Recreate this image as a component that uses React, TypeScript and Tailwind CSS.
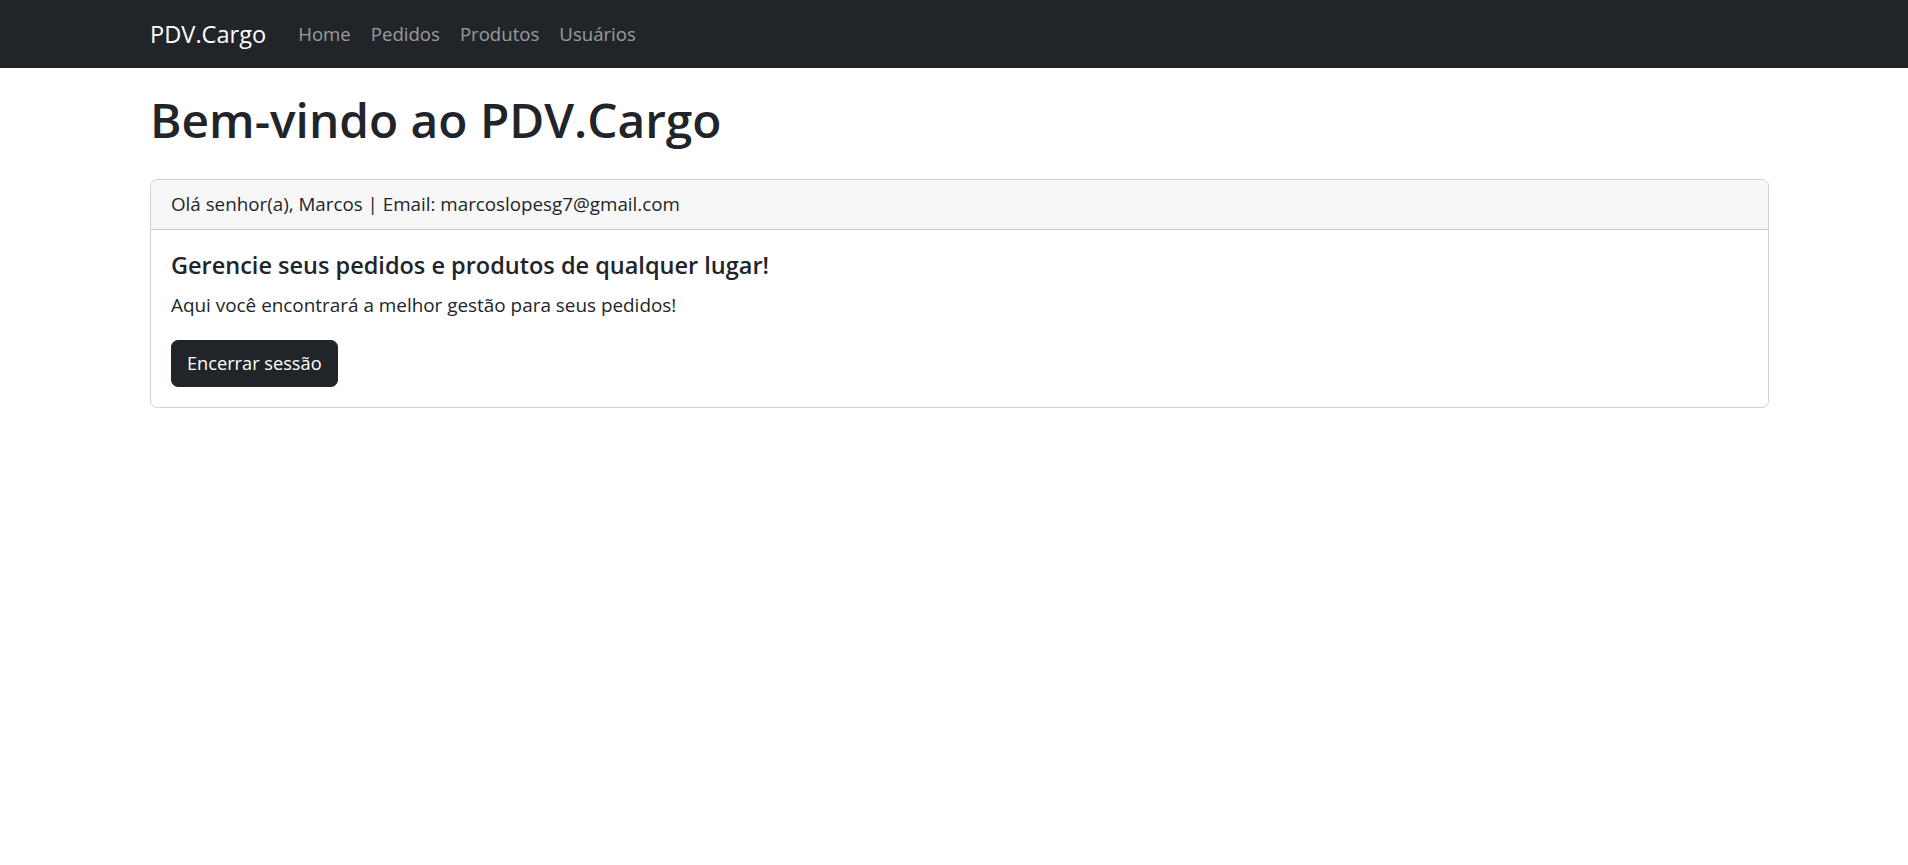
import React from "react";

export default function App() {
  const font = { fontFamily: '"Open Sans", "Noto Sans", "Liberation Sans", sans-serif' };
  return (
    <div className="min-h-screen bg-white text-[#212529]" style={font}>
      <nav className="h-[68px] bg-[#212529] flex items-center">
        <div className="pl-[150px] flex items-center">
          <span className="text-[23.6px] text-white leading-[30px] mr-[32px]">PDV.Cargo</span>
          <div className="flex items-center gap-[20px] text-[18.6px] leading-[30px] text-[rgba(255,255,255,0.55)]">
            <a className="cursor-pointer">Home</a>
            <a className="cursor-pointer">Pedidos</a>
            <a className="cursor-pointer">Produtos</a>
            <a className="cursor-pointer">Usuários</a>
          </div>
        </div>
      </nav>
      <main className="pl-[150px] pr-[139px]">
        <h1 className="mt-[22px] mb-[29px] text-[47.8px] leading-[60px] font-semibold">Bem-vindo ao PDV.Cargo</h1>
        <div className="border border-[rgba(0,0,0,0.175)] rounded-[7px] overflow-hidden">
          <div className="bg-[#f7f7f7] border-b border-[rgba(0,0,0,0.175)] px-[20px] py-[10px] text-[18.8px] leading-[29px]">
            Olá senhor(a), Marcos | Email: marcoslopesg7@gmail.com
          </div>
          <div className="p-[20px]">
            <h5 className="text-[23.5px] leading-[30px] font-semibold mb-[10px]">Gerencie seus pedidos e produtos de qualquer lugar!</h5>
            <p className="text-[18.9px] leading-[30px] mb-[20px]">Aqui você encontrará a melhor gestão para seus pedidos!</p>
            <button className="bg-[#212529] border border-[#212529] text-white rounded-[7px] px-[15px] py-[7px] text-[18.2px] leading-[31px]">
              Encerrar sessão
            </button>
          </div>
        </div>
      </main>
    </div>
  );
}
